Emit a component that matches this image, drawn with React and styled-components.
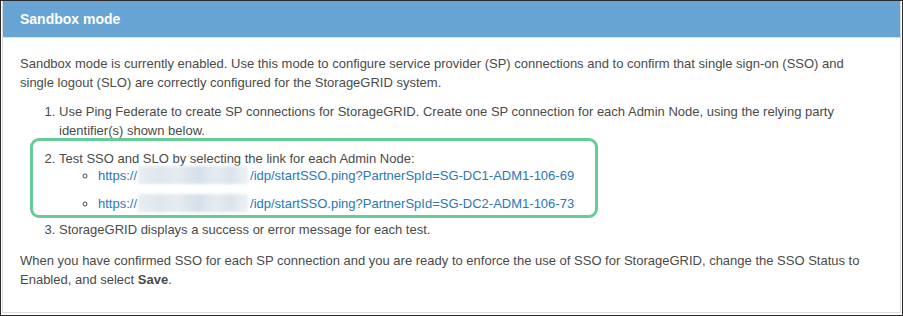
import styled, { createGlobalStyle } from "styled-components";

const GlobalStyle = createGlobalStyle`
  html, body {
    margin: 0;
    padding: 0;
    background: #fff;
  }
  body {
    font-family: "Liberation Sans", Arial, sans-serif;
  }
`;

const Frame = styled.div`
  width: 903px;
  height: 316px;
  box-sizing: border-box;
  border: 1px solid #2b2b2b;
  padding: 0 1px 2px 1px;
  background: #fff;
`;

const Panel = styled.section`
  height: 100%;
  box-sizing: border-box;
  border: 1px solid #dcdcdc;
  border-top: none;
`;

const Header = styled.header`
  height: 36px;
  display: flex;
  align-items: center;
  padding: 0 17px;
  background: #68a4d3;
  border-bottom: 1px solid #d5e4f0;
  color: #fff;
  font-size: 14px;
  font-weight: 700;
`;

const Body = styled.div`
  padding: 16px 16px 0 17px;
  color: #4a4a4a;
  font-size: 13px;
  line-height: 19px;
`;

const Para = styled.p`
  margin: 0 0 ${(p) => p.$gap || 0}px;
`;

const Steps = styled.ol`
  margin: 0 0 12px;
  padding-left: 39px;
`;

const Step = styled.li`
  position: relative;
  margin-bottom: ${(p) => p.$gap ?? 9}px;
`;

const Highlight = styled.span`
  position: absolute;
  left: -29px;
  top: -11px;
  width: 568px;
  height: 80px;
  box-sizing: border-box;
  border: 3px solid #66cc96;
  border-radius: 9px;
  pointer-events: none;
`;

const Links = styled.ul`
  margin: -2px 0 0;
  padding-left: 39px;
  list-style: circle;
`;

const LinkItem = styled.li`
  line-height: 18px;
  margin-bottom: ${(p) => p.$gap}px;
`;

const Link = styled.a`
  color: #2878b5;
  text-decoration: none;
`;

const Blur = styled.span`
  display: inline-block;
  width: 110px;
  height: 18px;
  margin: 0 2px 0 1px;
  vertical-align: -4px;
  background: linear-gradient(
    90deg,
    #e9eef3 0%,
    #dde6ee 20%,
    #e6ecf1 35%,
    #d3e0ea 55%,
    #e4ebf1 70%,
    #dbe4ec 85%,
    #edf1f4 100%
  );
  filter: blur(1.5px);
`;

const hosts = [
  "SG-DC1-ADM1-106-69",
  "SG-DC2-ADM1-106-73",
];

export default function App() {
  return (
    <>
      <GlobalStyle />
      <Frame>
        <Panel>
          <Header>Sandbox mode</Header>
          <Body>
            <Para $gap={10}>
              Sandbox mode is currently enabled. Use this mode to configure service provider (SP)
              connections and to confirm that single sign-on (SSO) and
              <br />
              single logout (SLO) are correctly configured for the StorageGRID system.
            </Para>
            <Steps>
              <Step>
                Use Ping Federate to create SP connections for StorageGRID. Create one SP connection
                for each Admin Node, using the relying party identifier(s) shown below.
              </Step>
              <Step $gap={0}>
                <Highlight />
                Test SSO and SLO by selecting the link for each Admin Node:
                <Links>
                  {hosts.map((h, i) => (
                    <LinkItem key={h} $gap={i === 0 ? 9 : 7}>
                      <Link href="#">
                        https://<Blur />/idp/startSSO.ping?PartnerSpId={h}
                      </Link>
                    </LinkItem>
                  ))}
                </Links>
              </Step>
              <Step $gap={0}>StorageGRID displays a success or error message for each test.</Step>
            </Steps>
            <Para>
              When you have confirmed SSO for each SP connection and you are ready to enforce the use
              of SSO for StorageGRID, change the SSO Status to Enabled, and select <b>Save</b>.
            </Para>
          </Body>
        </Panel>
      </Frame>
    </>
  );
}
